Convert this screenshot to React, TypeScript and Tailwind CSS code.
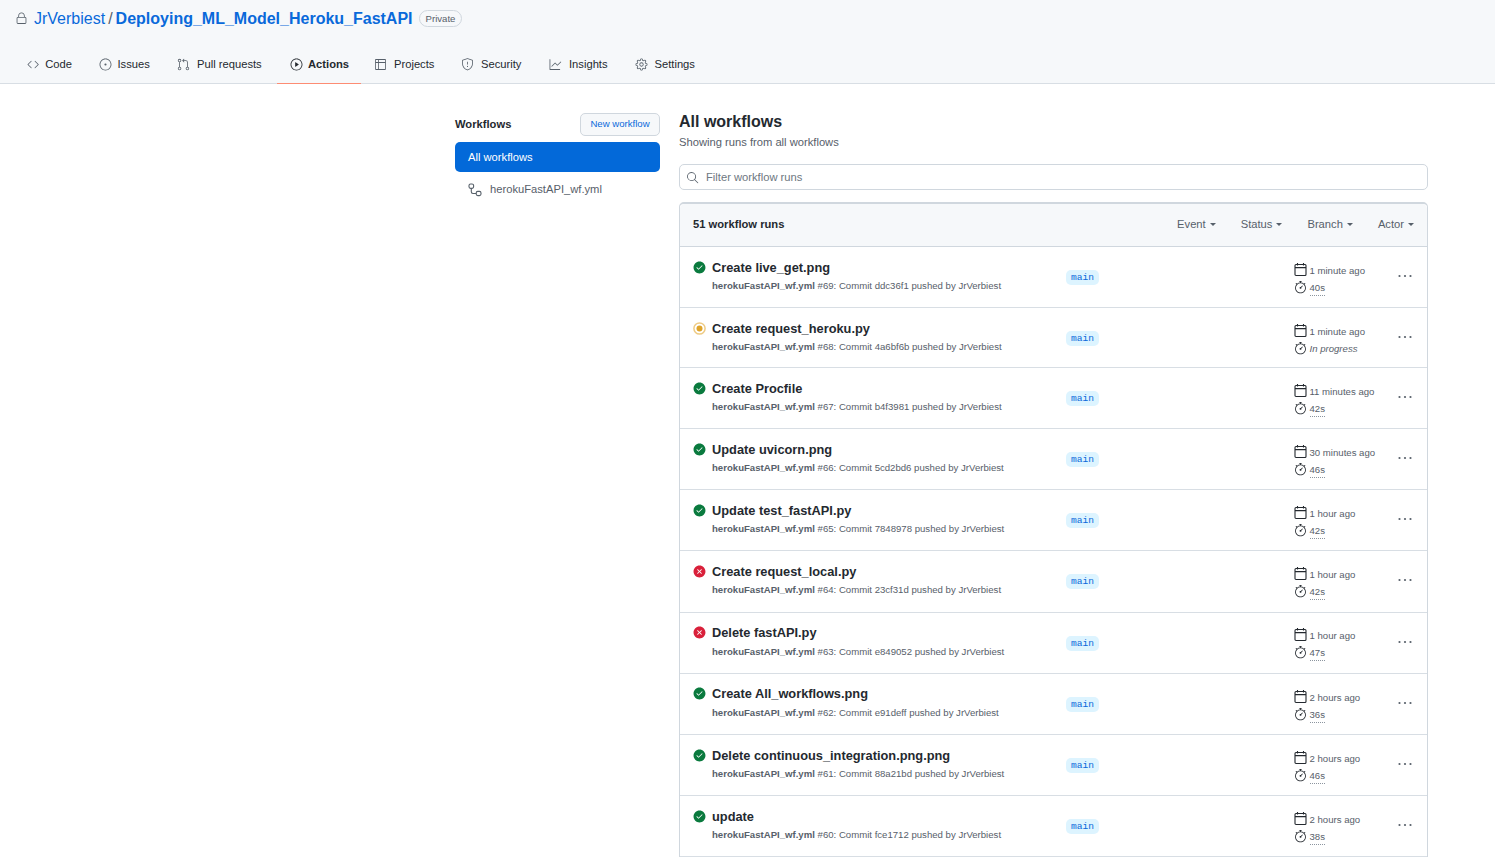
import React from "react";
import {
  GoLock, GoCode, GoIssueOpened, GoGitPullRequest, GoPlay, GoTable, GoShield, GoGraph, GoGear,
  GoCheckCircleFill, GoXCircleFill, GoStopwatch, GoSearch,
} from "react-icons/go";

const tabs = [
  { label: "Code", Icon: GoCode, cls: "w-[72px] pl-[27px] gap-[6px]" },
  { label: "Issues", Icon: GoIssueOpened, cls: "w-[92px] pl-[27px] gap-[5.5px]" },
  { label: "Pull requests", Icon: GoGitPullRequest, cls: "w-[113px] pl-[13px] gap-[7px]" },
  { label: "Actions", Icon: GoPlay, cls: "w-[84px] pl-[13px] gap-[5px]", active: true },
  { label: "Projects", Icon: GoTable, cls: "w-[87px] pl-[13px] gap-[7px]" },
  { label: "Security", Icon: GoShield, cls: "w-[88px] pl-[13px] gap-[7px]" },
  { label: "Insights", Icon: GoGraph, cls: "w-[86px] pl-[13px] gap-[7px]" },
  { label: "Settings", Icon: GoGear, cls: "w-[90px] pl-[13px] gap-[6.5px]" },
];

const runs = [
  { t: "Create live_get.png", n: 69, c: "ddc36f1", s: "ok", d: "1 minute ago", u: "40s", h: "h-[61px]", p: "pt-[13px]", g: "mt-[4px]", q: "pt-[15px]" },
  { t: "Create request_heroku.py", n: 68, c: "4a6bf6b", s: "run", d: "1 minute ago", u: "In progress", h: "h-[60px]", p: "pt-[13px]", g: "mt-[4px]", q: "pt-[15px]" },
  { t: "Create Procfile", n: 67, c: "b4f3981", s: "ok", d: "11 minutes ago", u: "42s", h: "h-[61px]", p: "pt-[13px]", g: "mt-[4px]", q: "pt-[15px]" },
  { t: "Update uvicorn.png", n: 66, c: "5cd2bd6", s: "ok", d: "30 minutes ago", u: "46s", h: "h-[61px]", p: "pt-[13px]", g: "mt-[4px]", q: "pt-[15px]" },
  { t: "Update test_fastAPI.py", n: 65, c: "7848978", s: "ok", d: "1 hour ago", u: "42s", h: "h-[61px]", p: "pt-[13px]", g: "mt-[4px]", q: "pt-[15px]" },
  { t: "Create request_local.py", n: 64, c: "23cf31d", s: "fail", d: "1 hour ago", u: "42s", h: "h-[62px]", p: "pt-[13px]", g: "mt-[4px]", q: "pt-[15px]" },
  { t: "Delete fastAPI.py", n: 63, c: "e849052", s: "fail", d: "1 hour ago", u: "47s", h: "h-[61px]", p: "pt-[12px]", g: "mt-[5px]", q: "pt-[14px]" },
  { t: "Create All_workflows.png", n: 62, c: "e91deff", s: "ok", d: "2 hours ago", u: "36s", h: "h-[61px]", p: "pt-[12px]", g: "mt-[5px]", q: "pt-[15px]" },
  { t: "Delete continuous_integration.png.png", n: 61, c: "88a21bd", s: "ok", d: "2 hours ago", u: "46s", h: "h-[61px]", p: "pt-[13px]", g: "mt-[4px]", q: "pt-[15px]" },
  { t: "update", n: 60, c: "fce1712", s: "ok", d: "2 hours ago", u: "38s", h: "h-[61px]", p: "pt-[13px]", g: "mt-[4px]", q: "pt-[15px]" },
];

function Caret() {
  return <span className="ml-[4px] inline-block border-x-[3.2px] border-t-[3.2px] border-x-transparent border-t-[#57606a] align-middle" />;
}

function Status({ s }: { s: string }) {
  if (s === "ok") return <GoCheckCircleFill size={13} color="#0a7a3e" />;
  if (s === "fail") return <GoXCircleFill size={13} color="#d9203a" />;
  return (
    <svg width="13" height="13" viewBox="0 0 13 13">
      <circle cx="6.5" cy="6.5" r="5.6" fill="none" stroke="#eecb85" strokeWidth="1.5" />
      <circle cx="6.5" cy="6.5" r="3" fill="#dfa42a" />
    </svg>
  );
}

function WorkflowIcon() {
  return (
    <svg width="14" height="14" viewBox="0 0 14 14" fill="none" stroke="#57606a" strokeWidth="1.1" className="mr-[8px]">
      <rect x="1" y="1" width="4.6" height="4.4" rx="1.6" />
      <rect x="8.2" y="8.4" width="4.8" height="4.2" rx="1.6" />
      <path d="M3.3 5.4v3.4c0 1 .6 1.7 1.7 1.7h3.2" />
    </svg>
  );
}

function CalendarIcon() {
  return (
    <svg width="13" height="14" viewBox="0 0 13 14" fill="none" stroke="#24292f" strokeWidth="1.1" className="-mt-[2px]">
      <rect x="1" y="1.5" width="11" height="11" rx="1" />
      <path d="M1 4.6h11M3.5 0v2.4M9.5 0v2.4" />
    </svg>
  );
}

function Dots() {
  return (
    <svg width="14" height="4" viewBox="0 0 14 4" fill="#57606a">
      <circle cx="1.5" cy="2" r="1.1" />
      <circle cx="7" cy="2" r="1.1" />
      <circle cx="12.5" cy="2" r="1.1" />
    </svg>
  );
}

export default function App() {
  return (
    <div className="h-[857px] overflow-hidden bg-white font-['Liberation_Sans',Arial,sans-serif] text-[#24292f]">
      <header className="h-[84px] border-b border-[#d8dee4] bg-[#f6f8fa]">
        <div className="flex h-[37px] items-center pl-[15px]">
          <GoLock size={13} className="mr-[6px] text-[#57606a]" />
          <a className="text-[16px] text-[#0969da]">JrVerbiest</a>
          <span className="mx-[3px] text-[16px] text-[#57606a]">/</span>
          <a className="text-[16px] font-bold text-[#0969da]">Deploying_ML_Model_Heroku_FastAPI</a>
          <span className="ml-[6px] rounded-full border border-[#d0d7de] px-[6px] py-[1px] text-[9.6px] font-medium leading-[13px] text-[#57606a]">Private</span>
        </div>
        <nav className="mt-[9px] flex h-[38px]">
          {tabs.map(({ label, Icon, cls, active }) => (
            <div key={label} className={`flex items-center ${cls} ${active ? "border-b border-[#fd8c73] font-bold" : "border-b border-transparent"} text-[11.2px] text-[#24292f]`}>
              <Icon size={13} className={active ? "text-[#24292f]" : "text-[#57606a]"} />
              <span>{label}</span>
            </div>
          ))}
        </nav>
      </header>

      <div className="flex pl-[455px] pr-[67px] pt-[28px]">
        <aside className="w-[205px] shrink-0">
          <div className="flex h-[24px] items-center justify-between pt-[1px]">
            <h2 className="text-[11.2px] font-bold">Workflows</h2>
            <button className="h-[23px] w-[80px] rounded-[5px] border border-[#d0d7de] bg-[#f6f8fa] text-[9.6px] text-[#0969da]">New workflow</button>
          </div>
          <div className="mt-[6px] flex h-[30px] items-center rounded-[5px] bg-[#0369d9] pl-[13px] text-[11.2px] text-white">All workflows</div>
          <div className="flex h-[35px] items-center pl-[13px] text-[11.2px] text-[#57606a]">
            <WorkflowIcon />
            <span>herokuFastAPI_wf.yml</span>
          </div>
        </aside>

        <main className="ml-[19px] min-w-0 flex-1">
          <h1 className="text-[16px] font-bold leading-[19px]">All workflows</h1>
          <p className="mt-[4px] text-[11.2px] leading-[15px] text-[#57606a]">Showing runs from all workflows</p>
          <div className="mt-[14px] flex h-[26px] items-center rounded-[5px] border border-[#d0d7de] pl-[6px] text-[11.2px] text-[#6e7781]">
            <GoSearch size={13} className="mr-[7px] text-[#57606a]" />
            <span>Filter workflow runs</span>
          </div>
          <section className="mt-[12px] rounded-t-[5px] border border-t-2 border-[#d0d7de]">
            <div className="flex h-[43px] items-center justify-between rounded-t-[5px] border-b border-[#d0d7de] bg-[#f6f8fa] pb-[2px] pl-[13px] pr-[13px]">
              <span className="text-[11.2px] font-bold">51 workflow runs</span>
              <div className="flex gap-[25px] text-[11.2px] text-[#57606a]">
                {["Event", "Status", "Branch", "Actor"].map((f) => (
                  <span key={f}>{f}<Caret /></span>
                ))}
              </div>
            </div>
            {runs.map((r) => (
              <div key={r.n} className={`flex ${r.h} items-start border-b border-[#d8dee4] pl-[13px]`}>
                <div className={`flex w-[373px] shrink-0 gap-[6px] ${r.p}`}>
                  <div className="w-[13px] pt-[1px]"><Status s={r.s} /></div>
                  <div>
                    <div className="text-[12.8px] font-bold leading-[16px]">{r.t}</div>
                    <div className={`${r.g} text-[9.6px] leading-[12px] text-[#57606a]`}>
                      <span className="font-bold">herokuFastAPI_wf.yml</span> #{r.n}: Commit {r.c} pushed by JrVerbiest
                    </div>
                  </div>
                </div>
                <div className="w-[228px] shrink-0 pt-[23px]">
                  <span className="block w-fit rounded-[5px] bg-[#ddf4ff] px-[5px] font-['Liberation_Mono',monospace] text-[9.6px] leading-[15px] text-[#0969da]">main</span>
                </div>
                <div className={`w-[104px] shrink-0 text-[9.6px] text-[#57606a] ${r.q}`}>
                  <div className="flex h-[17px] items-center gap-[2.5px]"><CalendarIcon /><span className="pt-[2px]">{r.d}</span></div>
                  <div className="flex h-[17px] items-center gap-[2.5px]">
                    <GoStopwatch size={13} className="text-[#24292f]" />
                    {r.s === "run" ? <i className="pt-[2px]">{r.u}</i> : <span className="mt-[2px] border-b border-dotted border-[#8c959f]">{r.u}</span>}
                  </div>
                </div>
                <div className="pt-[27px]"><Dots /></div>
              </div>
            ))}
          </section>
        </main>
      </div>
    </div>
  );
}
